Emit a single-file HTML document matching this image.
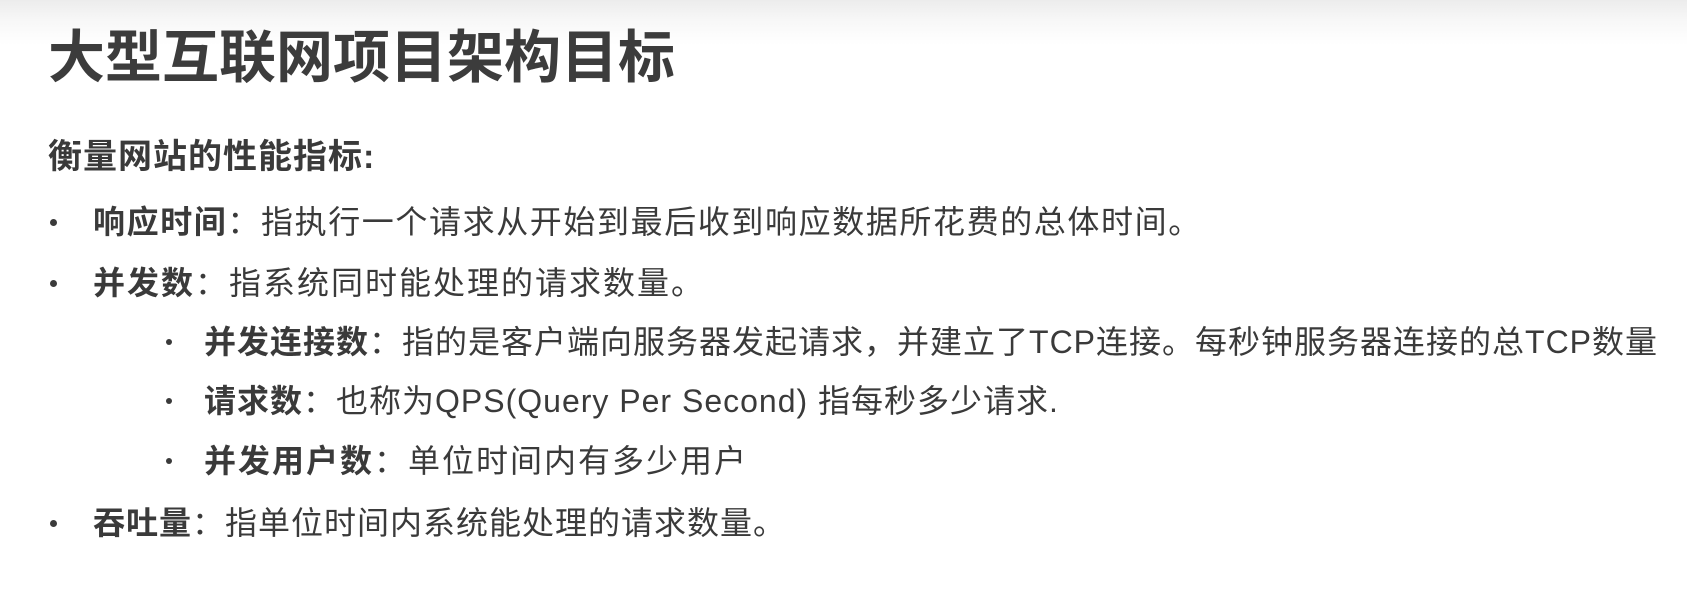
<!DOCTYPE html>
<html><head><meta charset="utf-8"><style>
html,body{margin:0;padding:0;}
body{width:1687px;height:598px;position:relative;overflow:hidden;background:linear-gradient(#ececec 0px,#f7f7f7 20px,#fff 45px);font-family:"Liberation Sans","Noto Sans CJK SC",sans-serif;color:#3a3a3a;}
.l{position:absolute;white-space:nowrap;line-height:1;}
.t{left:48px;top:30px;font-size:57px;font-weight:bold;color:#3c3c3c;}
.h{left:48px;top:140px;font-size:34px;font-weight:bold;letter-spacing:1px;}
.b{font-size:32px;letter-spacing:2px;}
.b b{font-weight:bold;}
.d{position:absolute;width:7px;height:7px;border-radius:50%;background:#3a3a3a;}
</style></head><body>
<div class="l t">大型互联网项目架构目标</div>
<div class="l h">衡量网站的性能指标:</div>
<div class="d" style="left:50px;top:219px"></div>
<div class="l b" style="left:93px;top:206px;letter-spacing:1.6px"><b>响应时间</b>：指执行一个请求从开始到最后收到响应数据所花费的总体时间。</div>
<div class="d" style="left:50px;top:280px"></div>
<div class="l b" style="left:93px;top:267px"><b>并发数</b>：指系统同时能处理的请求数量。</div>
<div class="d" style="left:166px;top:339px;width:6px;height:6px"></div>
<div class="l b" style="left:204px;top:326px;letter-spacing:1px"><b>并发连接数</b>：指的是客户端向服务器发起请求，并建立了TCP连接。每秒钟服务器连接的总TCP数量</div>
<div class="d" style="left:166px;top:398px;width:6px;height:6px"></div>
<div class="l b" style="left:204px;top:385px;letter-spacing:1px"><b>请求数</b>：也称为QPS(Query Per Second) 指每秒多少请求.</div>
<div class="d" style="left:166px;top:458px;width:6px;height:6px"></div>
<div class="l b" style="left:204px;top:445px"><b>并发用户数</b>：单位时间内有多少用户</div>
<div class="d" style="left:50px;top:520px"></div>
<div class="l b" style="left:93px;top:507px;letter-spacing:1px"><b>吞吐量</b>：指单位时间内系统能处理的请求数量。</div>
</body></html>
